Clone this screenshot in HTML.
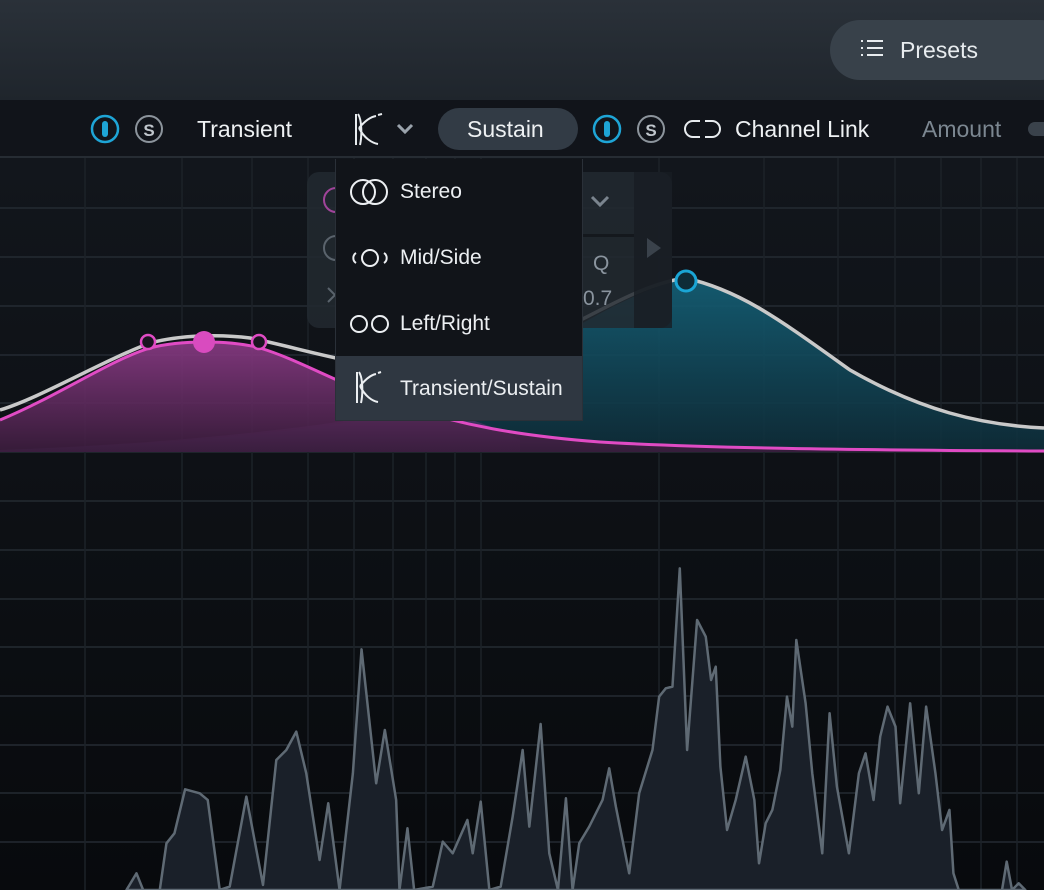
<!DOCTYPE html>
<html><head><meta charset="utf-8"><style>
*{margin:0;padding:0;box-sizing:border-box}
body{width:1044px;height:890px;overflow:hidden;background:#0c0f13;font-family:"Liberation Sans",sans-serif;position:relative}
.hdr{position:absolute;left:0;top:0;width:1044px;height:100px;background:linear-gradient(180deg,#2a3139,#1f252c)}
.presets{position:absolute;left:830px;top:20px;width:240px;height:60px;border-radius:30px;background:#38414a;color:#e8ecef;font-size:23px}
.tb{position:absolute;left:0;top:100px;width:1044px;height:58px;background:#11141a;border-bottom:2px solid #262c33}
.t{position:absolute;color:#eef1f3;font-size:23px;line-height:1}
.dd{position:absolute;left:335px;top:159px;width:248px;height:262px;background:#111419;border:1px solid #2a3038;border-top:none}
.dd .it{position:absolute;left:0;width:246px;height:66px;color:#eceff2;font-size:21px}
.dd .it span{position:absolute;left:64px;top:21px}
.dd svg{position:absolute;left:14px;top:18px}
</style></head><body>
<svg width="1044" height="890" style="position:absolute;left:0;top:0">
<defs>
<linearGradient id="bg" x1="0" y1="0" x2="0" y2="1"><stop offset="0" stop-color="#12161c"/><stop offset="1" stop-color="#080a0d"/></linearGradient>
<linearGradient id="pk" x1="0" y1="0" x2="0" y2="1"><stop offset="0" stop-color="#8a3a85"/><stop offset="1" stop-color="#3a1c3c"/></linearGradient>
<linearGradient id="tl" x1="0" y1="0" x2="0" y2="1"><stop offset="0" stop-color="#146178"/><stop offset="1" stop-color="#0e2c38"/></linearGradient>
</defs>
<rect x="0" y="158" width="1044" height="732" fill="url(#bg)"/>
<g stroke="#242b32" stroke-width="1.5">
<path d="M0 208H1044M0 257H1044M0 306H1044M0 355H1044M0 403H1044M0 452H1044M0 501H1044M0 550H1044M0 599H1044M0 647H1044M0 696H1044M0 745H1044M0 793H1044M0 842H1044"/>
<path d="M85 158V890M182 158V890M252 158V890M308 158V890M354 158V890M393 158V890M426 158V890M455 158V890M481 158V890M659 158V890M764 158V890M838 158V890M895 158V890M941 158V890M981 158V890M1017 158V890" stroke="#1c2228"/>
</g>
<path d="M0 450 C150 445 300 435 420 410 C520 370 600 300 685 278 C740 290 780 320 850 370 C920 410 980 425 1044 428 V452 H0Z" fill="url(#tl)" opacity="0.9"/>
<path d="M0 450 C150 445 300 430 380 415 C440 405 480 420 520 440 L520 452 H0Z" fill="#4a3565" opacity="0.7"/>
<path d="M0 420 C60 395 110 360 150 348 C180 340 230 340 260 348 C300 360 340 385 400 405 C460 425 520 436 600 442 C700 448 850 450 1044 451 V452 H0Z" fill="url(#pk)" opacity="0.9"/>
<path d="M0 410 C40 398 100 362 150 343 C180 335 220 334 250 338 C300 348 360 368 420 370 L560 330 C600 312 640 285 685 278 C740 290 780 320 850 370 C920 410 980 425 1044 428" fill="none" stroke="#c9c9c9" stroke-width="3.5"/>
<path d="M0 420 C60 395 110 360 150 348 C180 340 230 340 260 348 C300 360 340 385 400 405 C460 425 520 436 600 442 C700 448 850 450 1044 451" fill="none" stroke="#e04bc4" stroke-width="3"/>
<circle cx="148" cy="342" r="7" fill="#1a1420" stroke="#e04bc4" stroke-width="2.5"/>
<circle cx="259" cy="342" r="7" fill="#1a1420" stroke="#e04bc4" stroke-width="2.5"/>
<circle cx="204" cy="342" r="11" fill="#d94bbf"/>
<circle cx="686" cy="281" r="10" fill="#0e2c38" stroke="#1aa6d6" stroke-width="3"/>
<g transform="translate(0,440) scale(0.6658,0.3333)">
<path vector-effect="non-scaling-stroke" d="M190 1350L205 1300L215 1350L240 1350L250 1210L262 1180L278 1048L300 1060L312 1080L330 1350L345 1340L370 1070L395 1335L415 960L430 930L445 875L460 1000L480 1260L493 1090L510 1350L530 1000L543 628L565 1030L578 870L595 1080L600 1350L612 1165L622 1350L650 1340L665 1205L680 1240L702 1140L710 1240L722 1085L735 1350L752 1340L770 1130L785 930L795 1160L812 852L825 1240L838 1350L850 1075L860 1350L870 1210L885 1160L905 1080L915 985L925 1100L945 1300L960 1060L980 930L990 770L1000 745L1010 740L1021 385L1032 930L1047 540L1060 590L1068 720L1075 680L1082 980L1092 1170L1105 1080L1120 950L1133 1080L1140 1270L1150 1150L1160 1110L1172 990L1182 770L1190 860L1196 600L1210 790L1220 1000L1235 1240L1246 820L1257 1040L1275 1240L1290 1000L1300 940L1312 1080L1322 890L1333 800L1345 860L1352 1090L1367 790L1380 1060L1391 800L1405 1000L1415 1170L1426 1110L1432 1300L1440 1350L1505 1350L1512 1265L1520 1350L1530 1330L1540 1350Z" fill="#1a2029" stroke="#5f6a74" stroke-width="2.5" stroke-linejoin="round"/>
</g>
<rect x="307" y="172" width="365" height="156" rx="12" fill="#222930" opacity="0.85"/>
<rect x="634" y="172" width="38" height="156" fill="#181d23" opacity="0.8"/>
<rect x="582" y="234" width="52" height="3" fill="#14181d"/>
<circle cx="336" cy="200" r="12" fill="none" stroke="#a0449a" stroke-width="2"/>
<circle cx="336" cy="248" r="12" fill="none" stroke="#5a636c" stroke-width="2"/>
<path d="M328 288l7 7-7 7" fill="none" stroke="#5a636c" stroke-width="2"/>
<path d="M592 197l8 8 8-8" fill="none" stroke="#7a848e" stroke-width="3"/>
<path d="M647 238l14 10-14 10z" fill="#3a424b"/>
<text x="593" y="270" fill="#8a949e" font-size="21" font-family="Liberation Sans">Q</text>
<text x="583" y="305" fill="#8a949e" font-size="21" font-family="Liberation Sans">0.7</text>
</svg>
<div class="hdr"><div class="presets">
<svg width="24" height="20" style="position:absolute;left:30px;top:18px" stroke="#e8ecef" stroke-width="2"><path d="M7 3H23M7 10H23M7 17H23M1 3H3M1 10H3M1 17H3"/></svg>
<span style="position:absolute;left:70px;top:17px">Presets</span></div></div>
<div class="tb">
<svg width="1044" height="58" style="position:absolute;left:0;top:0">
<circle cx="105" cy="29" r="13" fill="none" stroke="#1ea5d6" stroke-width="2.5"/><rect x="102" y="21" width="6" height="16" rx="3" fill="#1ea5d6"/>
<circle cx="149" cy="29" r="13" fill="none" stroke="#8c949c" stroke-width="2"/><text x="149" y="36" text-anchor="middle" fill="#c0c6cc" font-size="17" font-family="Liberation Sans" font-weight="bold">S</text>
<path d="M356 14V45M358 14C362 20 362 36 360 45M359 28C364 22 370 17 376 16M378 15L382 14M359 28C364 38 372 43 378 44" fill="none" stroke="#e8ecef" stroke-width="2"/>
<path d="M398 25l7 7 7-7" fill="none" stroke="#9aa3ac" stroke-width="3"/>
<rect x="438" y="8" width="140" height="42" rx="21" fill="#323b45"/>
<circle cx="607" cy="29" r="13" fill="none" stroke="#1ea5d6" stroke-width="2.5"/><rect x="604" y="21" width="6" height="16" rx="3" fill="#1ea5d6"/>
<circle cx="651" cy="29" r="13" fill="none" stroke="#8c949c" stroke-width="2"/><text x="651" y="36" text-anchor="middle" fill="#c0c6cc" font-size="17" font-family="Liberation Sans" font-weight="bold">S</text>
<path d="M700 21H693a8 8 0 0 0 0 16H700M705 21H712a8 8 0 0 1 0 16H705" fill="none" stroke="#e8ecef" stroke-width="2"/>
<rect x="1028" y="22" width="30" height="14" rx="7" fill="#3a424b"/>
</svg>
<span class="t" style="left:197px;top:18px">Transient</span>
<span class="t" style="left:467px;top:18px">Sustain</span>
<span class="t" style="left:735px;top:18px">Channel Link</span>
<span class="t" style="left:922px;top:18px;color:#7c8791">Amount</span>
</div>
<div class="dd">
<div class="it" style="top:0"><svg width="40" height="30" fill="none" stroke="#eceff2" stroke-width="2"><circle cx="13" cy="15" r="12"/><circle cx="25" cy="15" r="12"/></svg><span>Stereo</span></div>
<div class="it" style="top:66px"><svg width="40" height="30" fill="none" stroke="#eceff2" stroke-width="2"><circle cx="20" cy="15" r="8"/><path d="M6 10a6 6 0 0 0 0 10M34 10a6 6 0 0 1 0 10"/></svg><span>Mid/Side</span></div>
<div class="it" style="top:132px"><svg width="40" height="30" fill="none" stroke="#eceff2" stroke-width="2"><circle cx="9" cy="15" r="8"/><circle cx="30" cy="15" r="8"/></svg><span>Left/Right</span></div>
<div class="it" style="top:197px;background:#2f3741;height:64px"><svg width="40" height="36" style="top:14px" fill="none" stroke="#eceff2" stroke-width="2"><path d="M7 2V33M9 2C13 8 13 24 11 33M10 16C15 10 20 5 26 4M28 3L31 2M10 16C15 26 22 31 28 32"/></svg><span>Transient/Sustain</span></div>
</div>
</body></html>
